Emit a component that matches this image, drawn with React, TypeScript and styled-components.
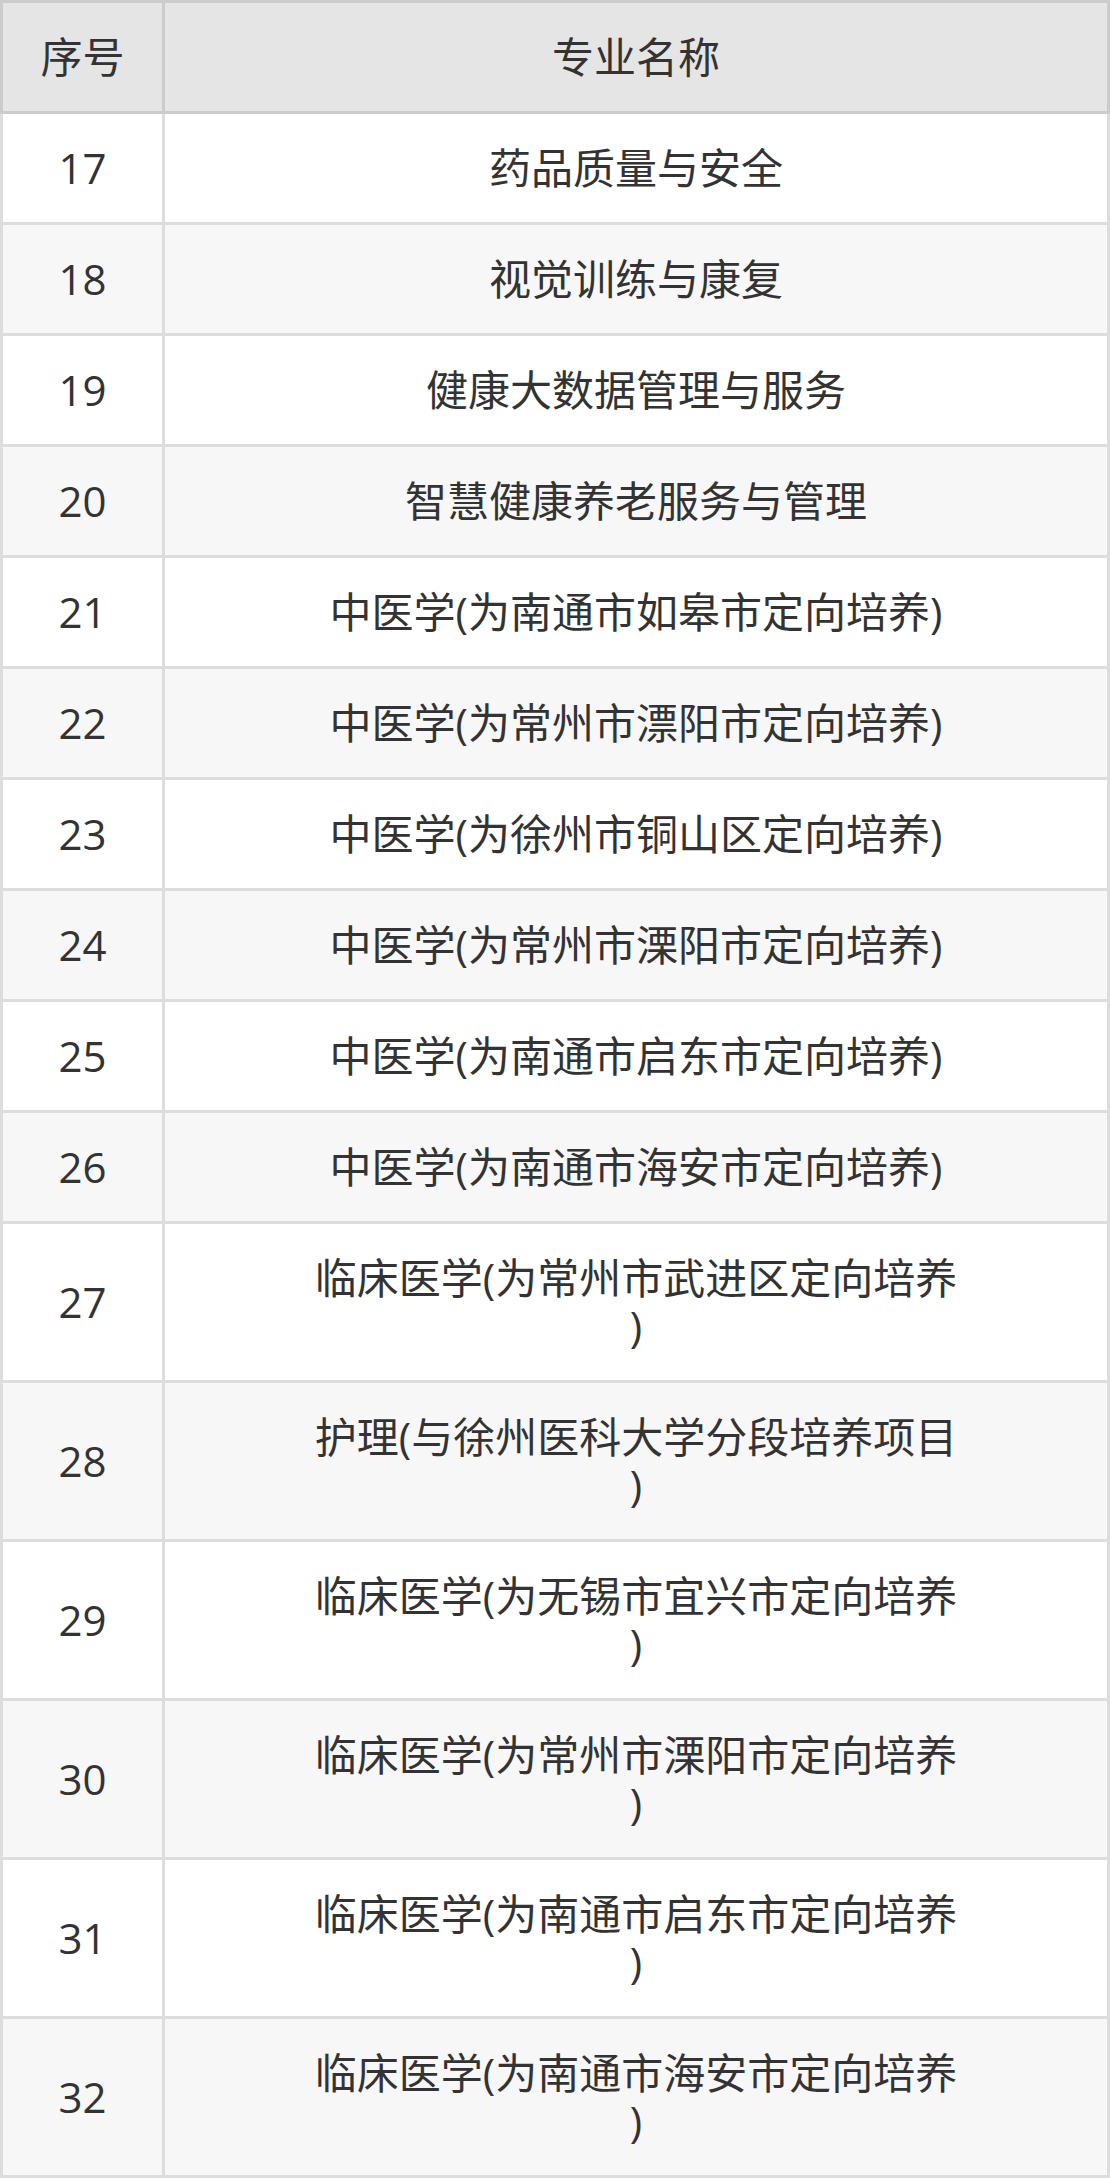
import styled, { createGlobalStyle } from 'styled-components'

const rows: [number, string][] = [
  [17, '药品质量与安全'],
  [18, '视觉训练与康复'],
  [19, '健康大数据管理与服务'],
  [20, '智慧健康养老服务与管理'],
  [21, '中医学(为南通市如皋市定向培养)'],
  [22, '中医学(为常州市漂阳市定向培养)'],
  [23, '中医学(为徐州市铜山区定向培养)'],
  [24, '中医学(为常州市溧阳市定向培养)'],
  [25, '中医学(为南通市启东市定向培养)'],
  [26, '中医学(为南通市海安市定向培养)'],
  [27, '临床医学(为常州市武进区定向培养)'],
  [28, '护理(与徐州医科大学分段培养项目)'],
  [29, '临床医学(为无锡市宜兴市定向培养)'],
  [30, '临床医学(为常州市溧阳市定向培养)'],
  [31, '临床医学(为南通市启东市定向培养)'],
  [32, '临床医学(为南通市海安市定向培养)'],
]

const GlobalStyle = createGlobalStyle`
  body {
    margin: 0;
    background: #fff;
    font-family: "Open Sans", "Noto Sans CJK SC", sans-serif;
  }
`

const Table = styled.table`
  width: 1110px;
  table-layout: fixed;
  border-collapse: separate;
  border-spacing: 0;
  color: #333;
  font-size: 42px;
  line-height: 48px;
`

const HeadCell = styled.th`
  font-weight: normal;
  background: #e5e5e5;
  border-top: 3px solid #ccc;
  border-bottom: 3px solid #ccc;
  border-right: 3px solid #ccc;
  padding: 30px 0;
  text-align: center;
  &:first-child {
    box-sizing: border-box;
    width: 165px;
    border-left: 3px solid #ccc;
  }
`

const Row = styled.tr<{ $striped: boolean }>`
  background: ${(p) => (p.$striped ? '#f7f7f7' : '#fff')};
`

const Cell = styled.td`
  border-bottom: 3px solid #ddd;
  border-right: 3px solid #ddd;
  padding: 30px 0;
  text-align: center;
  vertical-align: middle;
  &:first-child {
    border-left: 3px solid #ddd;
  }
`

const Name = styled.div`
  max-width: 650px;
  margin: 0 auto;
  line-break: anywhere;
`

export default function App() {
  return (
    <>
      <GlobalStyle />
      <Table>
        <thead>
          <tr>
            <HeadCell>序号</HeadCell>
            <HeadCell>专业名称</HeadCell>
          </tr>
        </thead>
        <tbody>
          {rows.map(([no, name], i) => (
            <Row key={no} $striped={i % 2 === 1}>
              <Cell>{no}</Cell>
              <Cell>
                <Name>{name}</Name>
              </Cell>
            </Row>
          ))}
        </tbody>
      </Table>
    </>
  )
}
